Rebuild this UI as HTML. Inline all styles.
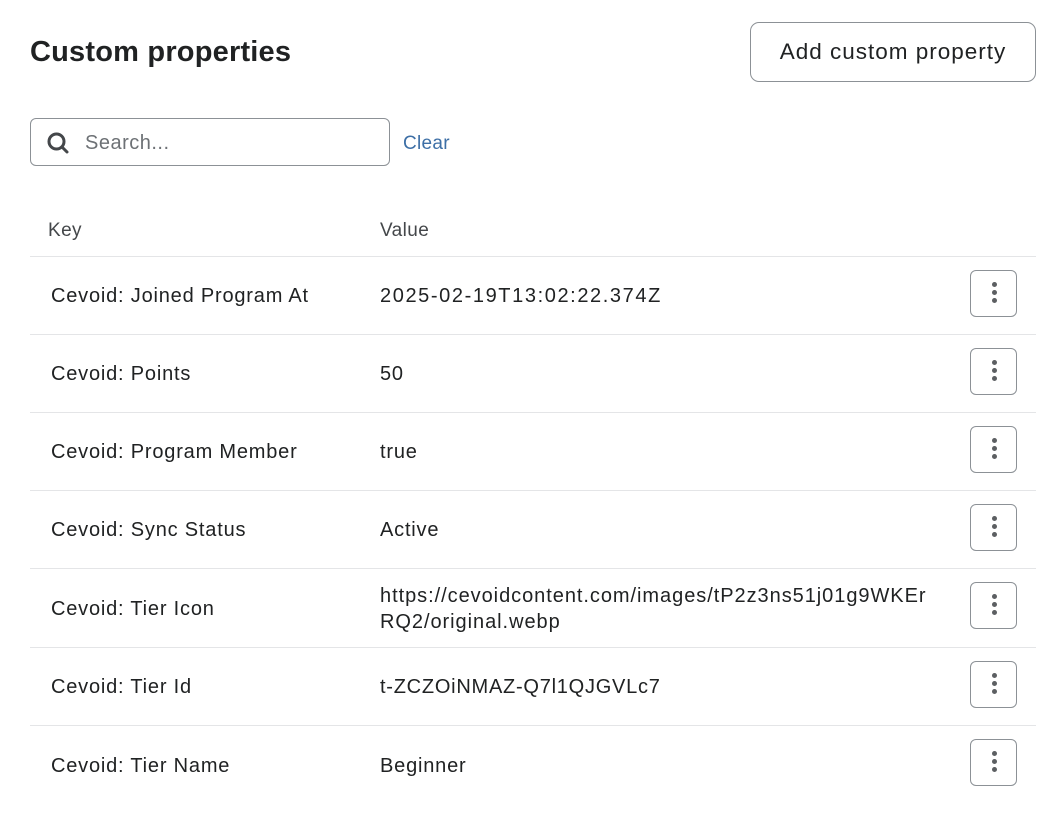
<!DOCTYPE html>
<html><head><style>
body{margin:0;background:#fff;font-family:"Liberation Sans",sans-serif;color:#202223;width:1060px;height:836px;position:relative;overflow:hidden}
.abs{position:absolute}
h1{position:absolute;left:30px;top:36px;margin:0;font-size:29px;font-weight:bold;letter-spacing:0.2px}
.btn{left:750px;top:22px;border:1px solid #8c9196;border-radius:9px;font-size:22.5px;letter-spacing:1px;display:flex;align-items:center;justify-content:center;box-sizing:border-box;width:286px;height:60px}
.search{left:30px;top:118px;width:360px;height:48px;border:1px solid #8c9196;border-radius:6px;box-sizing:border-box}
.search span{position:absolute;left:54px;top:13px;font-size:20px;color:#6d7175;letter-spacing:0.5px}
.clear{left:403px;top:133px;font-size:19px;color:#3d6fa6;letter-spacing:0.3px}
.hd{top:220px;font-size:19px;color:#44474a;letter-spacing:0.4px}
.row{left:30px;width:1006px;border-top:1px solid #e4e5e7}
.row .k{position:absolute;left:21px;font-size:20px;letter-spacing:0.8px}
.row .v{position:absolute;left:350px;font-size:20px;line-height:26px;letter-spacing:0.8px}
.menu{position:absolute;left:940px;width:47px;height:47px;border:1px solid #8c9196;border-radius:6px;box-sizing:border-box}
.menu i{position:absolute;left:20.5px;width:5px;height:5px;border-radius:50%;background:#5c5f62}
</style></head><body>
<h1>Custom properties</h1>
<div class="abs btn">Add custom property</div>
<div class="abs search">
<svg class="abs" style="left:15px;top:12px" width="24" height="24" viewBox="0 0 24 24"><circle cx="10.5" cy="10.5" r="7.5" fill="none" stroke="#44474a" stroke-width="3"/><path d="M16 16l5 5" stroke="#44474a" stroke-width="3" stroke-linecap="round"/></svg>
<span>Search...</span></div>
<div class="abs clear">Clear</div>
<div class="abs hd" style="left:48px">Key</div>
<div class="abs hd" style="left:380px">Value</div>

<div class="abs row" style="top:256px;height:78px"><div class="k" style="top:28px">Cevoid: Joined Program At</div><div class="v" style="top:26px;letter-spacing:1.6px">2025-02-19T13:02:22.374Z</div><div class="menu" style="top:13px"><i style="top:11px"></i><i style="top:19px"></i><i style="top:27px"></i></div></div>
<div class="abs row" style="top:334px;height:78px"><div class="k" style="top:28px">Cevoid: Points</div><div class="v" style="top:26px">50</div><div class="menu" style="top:13px"><i style="top:11px"></i><i style="top:19px"></i><i style="top:27px"></i></div></div>
<div class="abs row" style="top:412px;height:78px"><div class="k" style="top:28px">Cevoid: Program Member</div><div class="v" style="top:26px">true</div><div class="menu" style="top:13px"><i style="top:11px"></i><i style="top:19px"></i><i style="top:27px"></i></div></div>
<div class="abs row" style="top:490px;height:78px"><div class="k" style="top:28px">Cevoid: Sync Status</div><div class="v" style="top:26px">Active</div><div class="menu" style="top:13px"><i style="top:11px"></i><i style="top:19px"></i><i style="top:27px"></i></div></div>
<div class="abs row" style="top:568px;height:79px"><div class="k" style="top:29px">Cevoid: Tier Icon</div><div class="v" style="top:14px;letter-spacing:0.95px">https://cevoidcontent.com/images/tP2z3ns51j01g9WKEr<br>RQ2/original.webp</div><div class="menu" style="top:13px"><i style="top:11px"></i><i style="top:19px"></i><i style="top:27px"></i></div></div>
<div class="abs row" style="top:647px;height:78px"><div class="k" style="top:28px">Cevoid: Tier Id</div><div class="v" style="top:26px;letter-spacing:0.75px">t-ZCZOiNMAZ-Q7l1QJGVLc7</div><div class="menu" style="top:13px"><i style="top:11px"></i><i style="top:19px"></i><i style="top:27px"></i></div></div>
<div class="abs row" style="top:725px;height:78px"><div class="k" style="top:29px">Cevoid: Tier Name</div><div class="v" style="top:27px">Beginner</div><div class="menu" style="top:13px"><i style="top:11px"></i><i style="top:19px"></i><i style="top:27px"></i></div></div>
</body></html>
